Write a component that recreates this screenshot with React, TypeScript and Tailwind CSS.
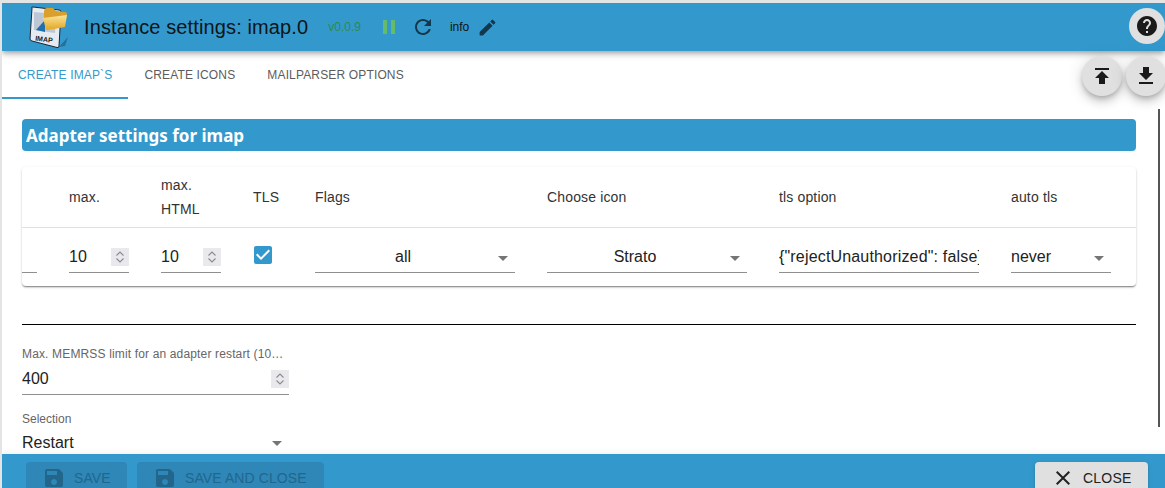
const ICONS = {
  pause: 'M6 19h4V5H6v14zm8-14v14h4V5h-4z',
  refresh:
    'M17.65 6.35C16.2 4.9 14.21 4 12 4c-4.42 0-7.99 3.58-7.99 8s3.57 8 7.99 8c3.73 0 6.84-2.55 7.73-6h-2.08c-.82 2.33-3.04 4-5.65 4-3.31 0-6-2.69-6-6s2.69-6 6-6c1.66 0 3.14.69 4.22 1.78L13 11h7V4l-2.35 2.35z',
  edit: 'M3 17.25V21h3.75L17.81 9.94l-3.75-3.75L3 17.25zM20.71 7.04c.39-.39.39-1.02 0-1.41l-2.34-2.34a.9959.9959 0 0 0-1.41 0l-1.83 1.83 3.75 3.75 1.83-1.83z',
  help: 'M12 2C6.48 2 2 6.48 2 12s4.48 10 10 10 10-4.48 10-10S17.52 2 12 2zm1 17h-2v-2h2v2zm2.07-7.75l-.9.92C13.45 12.9 13 13.5 13 15h-2v-.5c0-1.1.45-2.1 1.17-2.83l1.24-1.26c.37-.36.59-.86.59-1.41 0-1.1-.9-2-2-2s-2 .9-2 2H8c0-2.21 1.79-4 4-4s4 1.79 4 4c0 .88-.36 1.68-.93 2.25z',
  publish: 'M5 4v2h14V4H5zm0 10h4v6h6v-6h4l-7-7-7 7z',
  download: 'M19 9h-4V3H9v6H5l7 7 7-7zM5 18v2h14v-2H5z',
  save: 'M17 3H5c-1.11 0-2 .9-2 2v14c0 1.1.89 2 2 2h14c1.1 0 2-.9 2-2V7l-4-4zm-5 16c-1.66 0-3-1.34-3-3s1.34-3 3-3 3 1.34 3 3-1.34 3-3 3zm3-10H5V5h10v4z',
  close:
    'M19 6.41L17.59 5 12 10.59 6.41 5 5 6.41 10.59 12 5 17.59 6.41 19 12 13.41 17.59 19 19 17.59 13.41 12z',
  checkbox:
    'M19 3H5c-1.11 0-2 .9-2 2v14c0 1.1.89 2 2 2h14c1.11 0 2-.9 2-2V5c0-1.1-.89-2-2-2zm-9 14l-5-5 1.41-1.41L10 14.17l7.59-7.59L19 8l-9 9z',
};

function Icon({ name, className }: { name: keyof typeof ICONS; className?: string }) {
  return (
    <svg viewBox="0 0 24 24" fill="currentColor" className={className}>
      <path d={ICONS[name]} />
    </svg>
  );
}

function ImapLogo() {
  return (
    <svg viewBox="0 0 40 42" className="w-10 h-[42px]">
      <defs>
        <linearGradient id="folderFront" x1="0" y1="0" x2="0" y2="1">
          <stop offset="0" stopColor="#fbe49a" />
          <stop offset="1" stopColor="#e3a51f" />
        </linearGradient>
      </defs>
      <path d="M30 41 L39 31 L36 40 Z" fill="#256f9c" />
      <path
        d="M3 2 Q2 1 4 1 L30 4 Q32 4 32 6 L30 40 Q30 42 28 41.5 L3 35 Q1 34.5 1 33 Z"
        fill="#e6ebf2"
        stroke="#1c2530"
        strokeWidth="1"
      />
      <path d="M5 6 L27 8 L26 27 L5 24 Z" fill="#bcc6d4" />
      <path d="M7 24 L16 14 L16 26 Z" fill="#1f6fae" />
      <text x="6" y="34.5" fontSize="7" fontWeight="700" fill="#222" transform="rotate(8 6 34)" fontFamily="'Liberation Sans', sans-serif">
        IMAP
      </text>
      <path d="M15 6 Q15 2 18 2 L24 2 L27 5 L36 6 Q38 6 38 8 L37 13 L15 13 Z" fill="#d9a02e" />
      <path d="M14 12 L38 9 L36 21 Q26 23 17 24 Z" fill="url(#folderFront)" />
    </svg>
  );
}

function Spinner() {
  return (
    <svg viewBox="0 0 18 18" className="w-[18px] h-[18px] bg-[#e9e9ed] text-[#8a8a8f] shrink-0" fill="none" stroke="currentColor" strokeWidth="1.1">
      <path d="M5.5 7.5 L9 4 L12.5 7.5" />
      <path d="M5.5 10.5 L9 14 L12.5 10.5" />
    </svg>
  );
}

function NumberField({ value }: { value: string }) {
  return (
    <div className="w-[60px] h-[31px] flex items-center justify-between border-b border-[#8f8f8f] text-base text-[#222]">
      <span>{value}</span>
      <Spinner />
    </div>
  );
}

function SelectField({ value, centered, width }: { value: string; centered?: boolean; width: string }) {
  return (
    <div className={`${width} h-[31px] relative flex items-center border-b border-[#8f8f8f] text-base text-[#222]`}>
      <span className={centered ? 'w-full text-center pr-6' : ''}>{value}</span>
      <svg viewBox="0 0 24 24" className="absolute right-0 top-[4px] w-6 h-6 text-[#757575]" fill="currentColor">
        <path d="M7 10l5 5 5-5z" />
      </svg>
    </div>
  );
}

function FooterButton({ label, width }: { label: string; width: string }) {
  return (
    <div className={`${width} h-8 rounded bg-[#2e87b6] flex items-center pl-4 text-sm tracking-[0.1px] text-[#22668c]`}>
      <Icon name="save" className="w-6 h-6 mr-2" />
      <span>{label}</span>
    </div>
  );
}

export default function App() {
  const tabs = ['CREATE IMAP`S', 'CREATE ICONS', 'MAILPARSER OPTIONS'];

  return (
    <div className="relative w-[1165px] h-[488px] overflow-hidden flex flex-col bg-white border-l-2 border-t-[3px] border-[#e4e4e4] font-['Liberation_Sans',Arial,sans-serif]">
      {/* Title bar */}
      <header className="relative z-10 h-12 shrink-0 flex items-center bg-[#3399cc] text-[#111] shadow-[0_2px_4px_-1px_rgba(0,0,0,0.2),0_4px_5px_0_rgba(0,0,0,0.14),0_1px_10px_0_rgba(0,0,0,0.12)]">
        <div className="ml-[27px] mr-[15px] shrink-0">
          <ImapLogo />
        </div>
        <h1 className="text-xl leading-none tracking-[0.12px] text-[#101418]">Instance settings: imap.0</h1>
        <span className="ml-5 text-xs text-[#2e8b4a]">v0.0.9</span>
        <Icon name="pause" className="ml-4 w-6 h-6 text-[#66bb6a]" />
        <Icon name="refresh" className="ml-[10px] w-6 h-6 text-[#15374c]" />
        <span className="ml-[15px] text-xs">info</span>
        <Icon name="edit" className="ml-2 w-[21px] h-[21px] text-[#15374c]" />
      </header>

      <div className="absolute z-20 top-[5px] right-0 w-9 h-9 rounded-full bg-[#e0e0e0] flex items-center justify-center text-[#1a1a1a]">
        <Icon name="help" className="w-6 h-6" />
      </div>

      {/* Tabs */}
      <nav className="h-12 shrink-0 flex text-xs tracking-[0.15px] text-[#5c5c5c]">
        {tabs.map((tab, i) => (
          <div
            key={tab}
            className={`px-4 flex items-center pt-[1px] border-b-2 ${
              i === 0 ? 'border-[#3399cc] text-[#3399cc]' : 'border-transparent'
            }`}
          >
            {tab}
          </div>
        ))}
      </nav>

      <div className="absolute z-20 top-[53px] right-[43px] w-10 h-10 rounded-full bg-[#e0e0e0] flex items-center justify-center text-[#1a1a1a] shadow-[0_3px_5px_-1px_rgba(0,0,0,0.2),0_6px_10px_0_rgba(0,0,0,0.14),0_1px_18px_0_rgba(0,0,0,0.12)]">
        <Icon name="publish" className="w-6 h-6" />
      </div>
      <div className="absolute z-20 top-[53px] -right-[1px] w-10 h-10 rounded-full bg-[#e0e0e0] flex items-center justify-center text-[#1a1a1a] shadow-[0_3px_5px_-1px_rgba(0,0,0,0.2),0_6px_10px_0_rgba(0,0,0,0.14),0_1px_18px_0_rgba(0,0,0,0.12)]">
        <Icon name="download" className="w-6 h-6" />
      </div>

      {/* Scroll area */}
      <div className="flex-1 min-h-0 flex overflow-hidden">
        <main className="w-[1156px] shrink-0 pl-5 pt-5 pr-5">
          <div className="w-[1114px] h-8 rounded bg-[#3399cc] pl-1 pt-0.5 flex items-center text-white font-bold text-[17px] font-['Noto_Sans',sans-serif]">
            Adapter settings for imap
          </div>

          <div className="w-[1114px] mt-4 rounded shadow-[0_2px_2px_-1px_rgba(0,0,0,0.35),0_1px_1px_0_rgba(0,0,0,0.14),0_1px_3px_0_rgba(0,0,0,0.14)]">
            <div className="h-[61px] flex gap-8 items-center border-b border-[#e0e0e0] text-sm tracking-[0.15px] leading-6 text-[#333]">
              <div className="w-[15px]" />
              <div className="w-[60px]">max.</div>
              <div className="w-[60px]">
                max.
                <br />
                HTML
              </div>
              <div className="w-[30px]">TLS</div>
              <div className="w-[200px]">Flags</div>
              <div className="w-[200px]">Choose icon</div>
              <div className="w-[200px]">tls option</div>
              <div className="w-[100px]">auto tls</div>
            </div>
            <div className="h-[58px] pt-[14px] flex gap-8 items-start">
              <div className="w-[15px] h-[31px] border-b border-[#8f8f8f]" />
              <NumberField value="10" />
              <NumberField value="10" />
              <div className="w-[30px] pt-px">
                <Icon name="checkbox" className="w-6 h-6 -ml-0.5 text-[#3399cc]" />
              </div>
              <SelectField value="all" centered width="w-[200px]" />
              <SelectField value="Strato" centered width="w-[200px]" />
              <div className="w-[200px] h-[31px] flex items-center border-b border-[#8f8f8f] text-base tracking-[0.17px] text-[#222] overflow-hidden whitespace-nowrap">
                {'{"rejectUnauthorized": false}'}
              </div>
              <SelectField value="never" width="w-[100px]" />
            </div>
          </div>

          <div className="w-[1114px] mt-[38px] border-t border-black" />

          <div className="mt-[21px] w-[267px]">
            <div className="text-xs leading-4 tracking-[0.15px] text-[#666] truncate">Max. MEMRSS limit for an adapter restart (1000 MB)</div>
            <div className="h-[33px] flex items-center justify-between border-b border-[#8f8f8f] text-base text-[#222] pt-0.5">
              <span>400</span>
              <Spinner />
            </div>
          </div>

          <div className="mt-4 w-[267px]">
            <div className="text-xs leading-4 text-[#666]">Selection</div>
            <div className="h-8 relative flex items-center text-base text-[#222]">
              <span>Restart</span>
              <svg viewBox="0 0 24 24" className="absolute right-0 top-1 w-6 h-6 text-[#757575]" fill="currentColor">
                <path d="M7 10l5 5 5-5z" />
              </svg>
            </div>
          </div>
        </main>
        <div className="mt-2.5 w-0.5 h-[318px] bg-[#555]" />
      </div>

      {/* Footer */}
      <footer className="relative z-10 h-[34px] shrink-0 overflow-hidden flex items-start pt-2 pl-6 gap-2.5 bg-[#3399cc] shadow-[0_-2px_6px_rgba(0,0,0,0.06)]">
        <FooterButton label="SAVE" width="w-[101px]" />
        <FooterButton label="SAVE AND CLOSE" width="w-[187px]" />
        <div className="ml-auto mr-[17px] w-[113px] h-8 rounded bg-[#e0e0e0] flex items-center pl-4 text-sm tracking-[0.2px] text-[#222] shadow-[0_3px_1px_-2px_rgba(0,0,0,0.2),0_2px_2px_0_rgba(0,0,0,0.14),0_1px_5px_0_rgba(0,0,0,0.12)]">
          <Icon name="close" className="w-6 h-6 mr-2" />
          CLOSE
        </div>
      </footer>
    </div>
  );
}
